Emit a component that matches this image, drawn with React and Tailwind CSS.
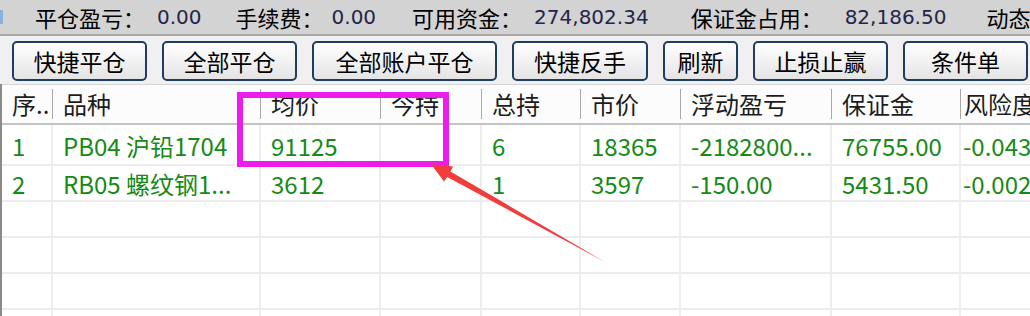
import React from 'react';

const stats = [
  { label: '平仓盈亏：', value: '0.00', ml: 'ml-[32px]', vml: 'ml-[12px]' },
  { label: '手续费：', value: '0.00', ml: 'ml-[34px]', vml: 'ml-[8px]' },
  { label: '可用资金：', value: '274,802.34', ml: 'ml-[36px]', vml: 'ml-[12px]' },
  { label: '保证金占用：', value: '82,186.50', ml: 'ml-[42px]', vml: 'ml-[22px]' },
  { label: '动态权益：', value: '', ml: 'ml-[40px]', vml: 'ml-[12px]' },
];

const buttons = [
  { text: '快捷平仓', w: 'w-[135px]' },
  { text: '全部平仓', w: 'w-[135px]' },
  { text: '全部账户平仓', w: 'w-[185px]' },
  { text: '快捷反手', w: 'w-[136px]' },
  { text: '刷新', w: 'w-[75px]' },
  { text: '止损止赢', w: 'w-[135px]' },
  { text: '条件单', w: 'w-[125px]' },
];

const headers = ['序..', '品种', '均价', '今持', '总持', '市价', '浮动盈亏', '保证金', '风险度'];

const rows = [
  ['1', 'PB04 沪铅1704', '91125', '', '6', '18365', '-2182800...', '76755.00', '-0.0432'],
  ['2', 'RB05 螺纹钢1...', '3612', '', '1', '3597', '-150.00', '5431.50', '-0.0028'],
  ['', '', '', '', '', '', '', '', ''],
  ['', '', '', '', '', '', '', '', ''],
  ['', '', '', '', '', '', '', '', ''],
  ['', '', '', '', '', '', '', '', ''],
  ['', '', '', '', '', '', '', '', ''],
];

const cols = 'grid grid-cols-[51px_208px_120px_101px_99px_100px_151px_129px_120px]';

const App = () => {
  return (
    <div className="relative w-[1030px] h-[316px] overflow-hidden bg-white font-['Noto_Sans_CJK_SC',sans-serif]">
      {/* account summary bar */}
      <div className="h-[36px] bg-[#d3d3d3] border-b-2 border-[#a7a7a7] flex items-center whitespace-nowrap overflow-hidden">
        <span className="w-[3px] h-[14px] bg-[#86b2dc] shrink-0"></span>
        {stats.map((s, i) => (
          <span key={i} className={`flex items-center shrink-0 ${s.ml}`}>
            <span className="text-[22px] leading-none text-black">{s.label}</span>
            {s.value && (
              <span className={`${s.vml} font-['DejaVu_Sans',sans-serif] text-[20px] leading-none text-[#24244a]`}>
                {s.value}
              </span>
            )}
          </span>
        ))}
      </div>

      {/* toolbar */}
      <div className="h-[48px] bg-[#f0f0f0] flex items-start pt-[5px] pl-[12px] gap-[15px] whitespace-nowrap">
        {buttons.map((b, i) => (
          <button
            key={i}
            className={`${b.w} h-[40px] shrink-0 rounded-[5px] border-2 border-[#1f3d60] bg-linear-to-b from-white to-[#e4e4e4] text-[23px] leading-none text-black flex items-center justify-center`}
          >
            {b.text}
          </button>
        ))}
      </div>

      {/* positions table */}
      <div className="border-l-2 border-[#8a8a8a]">
        <div className={`${cols} h-[41px] border-t border-[#d6d6d6] border-b-2 border-b-[#c4c4c4] bg-[#fcfcfc]`}>
          {headers.map((h, i) => (
            <div key={i} className="flex items-center justify-between">
              <span className={`${i === 8 ? 'pl-[3px]' : 'pl-[10px]'} text-[24px] leading-none text-[#1c1c1c] whitespace-nowrap`}>{h}</span>
              {i < 8 && <span className="w-[1px] h-[30px] bg-[#a8a8a8] shrink-0"></span>}
            </div>
          ))}
        </div>
        {rows.map((r, ri) => (
          <div key={ri} className={`${cols} ${ri === 0 ? 'h-[41px]' : 'h-[36px]'} border-b-2 border-[#ececec]`}>
            {r.map((c, ci) => (
              <div
                key={ci}
                className={`flex items-center ${ci === 8 ? 'pl-[2px]' : 'pl-[10px] border-r-2 border-[#ededed]'} pt-[2px] text-[24px] leading-none text-[#168a16] whitespace-nowrap overflow-hidden`}
              >
                {c}
              </div>
            ))}
          </div>
        ))}
      </div>

      {/* annotation: highlight box + arrow */}
      <div className="absolute left-[237px] top-[92px] w-[212px] h-[75px] border-[6px] border-[#ec1cec]"></div>
      <svg className="absolute left-0 top-0 pointer-events-none" width="1030" height="316" viewBox="0 0 1030 316">
        <polygon
          points="431,164 453,166.5 450.4,171.4 605,262 447.2,177 444,181.5"
          fill="#f23b3b"
        />
      </svg>
    </div>
  );
};

export default App;
